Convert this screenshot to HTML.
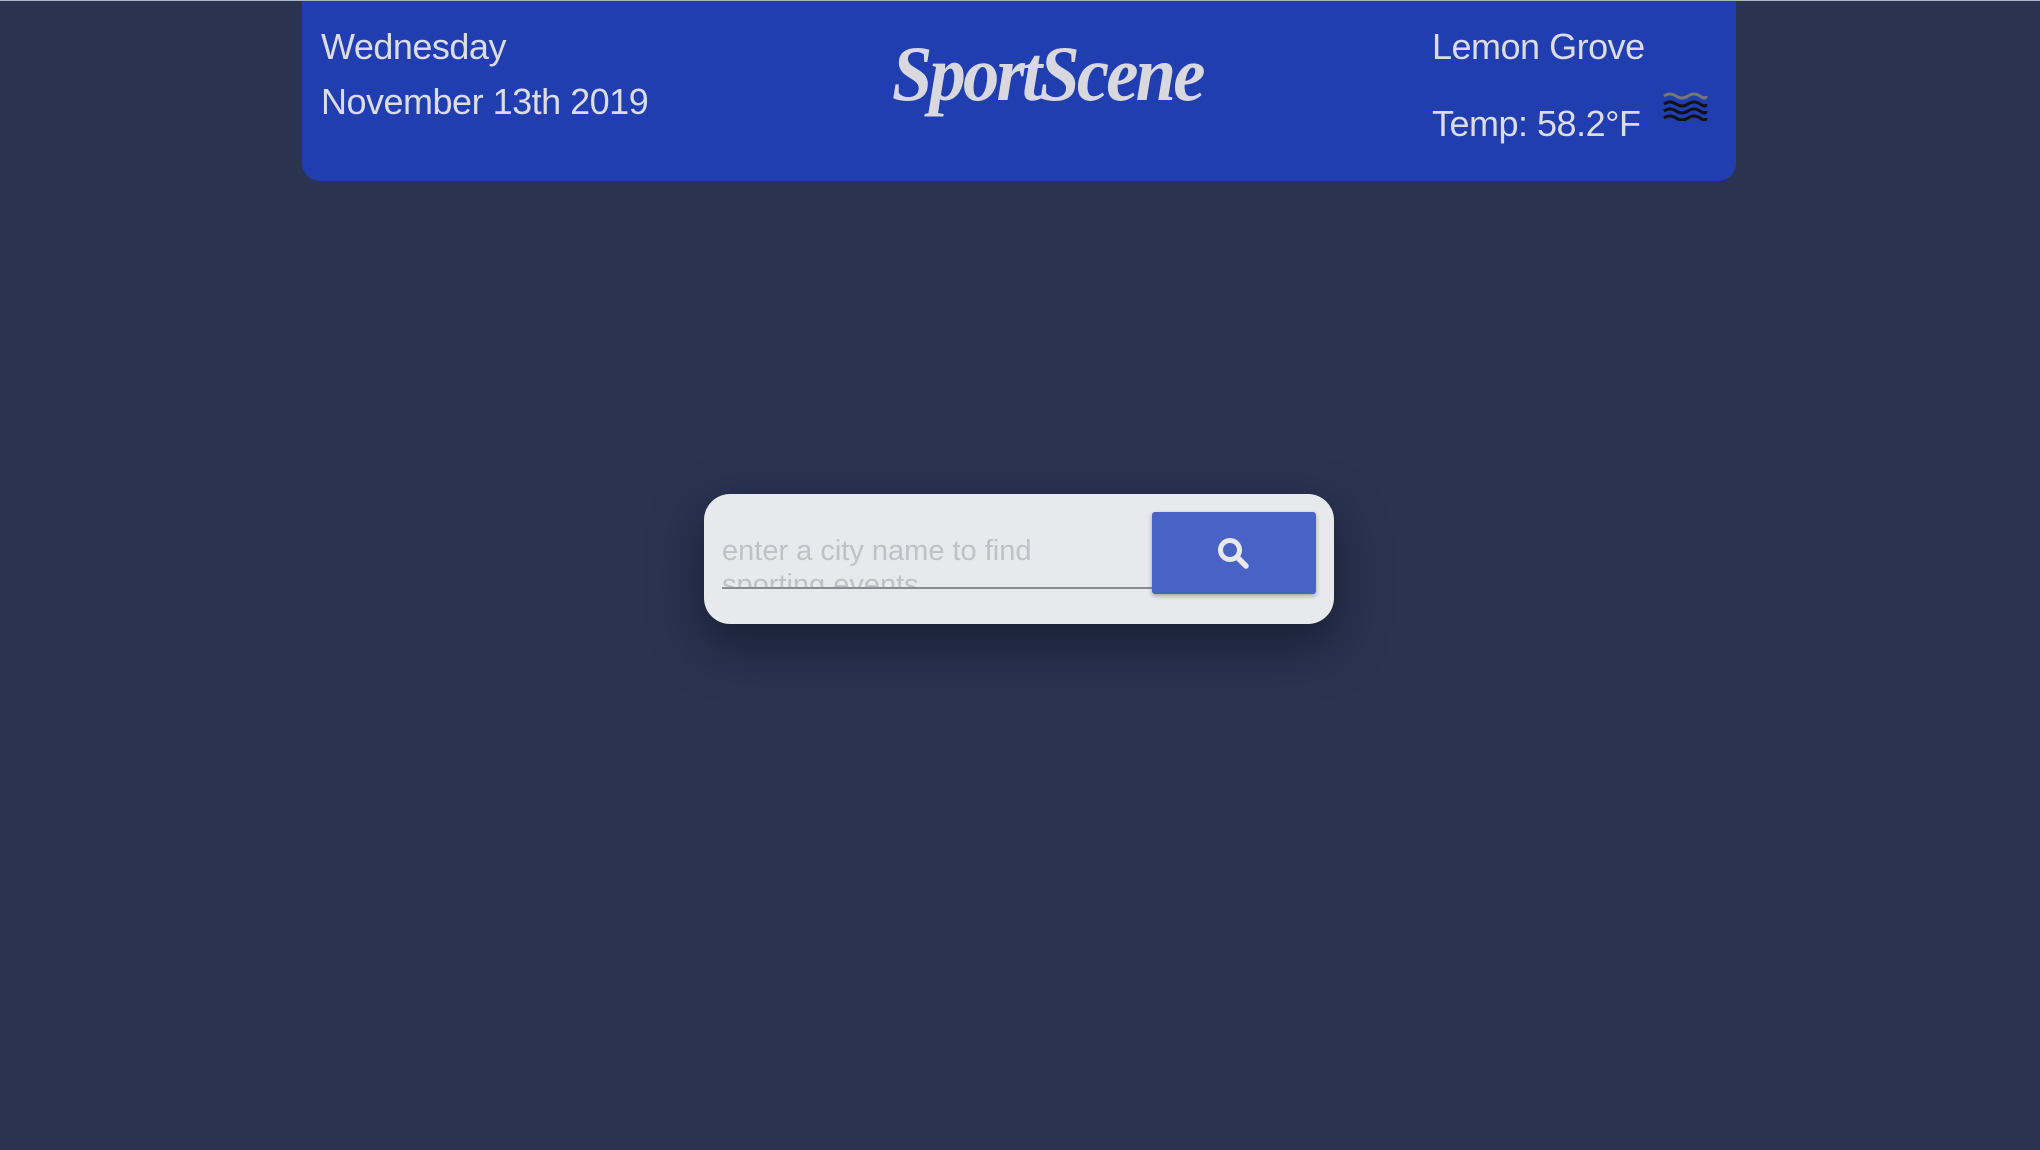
<!DOCTYPE html>
<html><head><meta charset="utf-8"><style>
html,body{margin:0;padding:0;width:2040px;height:1150px;background:#2a3350;overflow:hidden;font-family:"Liberation Sans","DejaVu Sans",sans-serif}
.hdr{position:absolute;left:302px;top:1px;width:1434px;height:180px;background:#203eb0;border-radius:0 0 18px 18px;color:#dcdce4}
.top{position:absolute;left:0;top:0;width:2040px;height:1px;background:#aab0c8}
.t{position:absolute;font-size:36px;white-space:nowrap;letter-spacing:-0.5px}
.logo{position:absolute;left:590px;top:28px;font-family:"Liberation Serif",serif;font-style:italic;font-weight:bold;font-size:78px;color:#d8d8de;letter-spacing:-3px;transform:scaleX(0.93);transform-origin:left}
.card{position:absolute;left:704px;top:494px;width:630px;height:130px;background:#e8e9ed;border-radius:26px;box-shadow:0 20px 50px rgba(10,15,30,.55)}
.ph{position:absolute;left:18px;top:40px;width:420px;height:54px;overflow:hidden;font-size:29px;line-height:34px;color:#c0c1c7}
.ul{position:absolute;left:18px;top:93px;width:430px;height:2px;background:#8a8b90}
.btn{position:absolute;left:448px;top:18px;width:164px;height:82px;background:#4862c6;border-radius:3px;box-shadow:0 2px 5px rgba(0,0,0,.3)}
</style></head><body>
<div class="top"></div>
<div class="hdr">
 <div class="t" style="left:19px;top:25px">Wednesday</div>
 <div class="t" style="left:19px;top:80px">November 13th 2019</div>
 <div class="logo">SportScene</div>
 <div class="t" style="left:1130px;top:25px">Lemon Grove</div>
 <div class="t" style="left:1130px;top:102px">Temp: 58.2°F</div>
 <svg style="position:absolute;left:1360px;top:90px" width="46" height="30" viewBox="0 0 46 30">
  <path d="M2 5 Q8 1 14 5 T26 5 T38 5 T44 5" stroke="#777" stroke-width="3" fill="none"/>
  <path d="M2 13 Q8 9 14 13 T26 13 T38 13 T44 13" stroke="#111" stroke-width="3" fill="none"/>
  <path d="M2 20 Q8 16 14 20 T26 20 T38 20 T44 20" stroke="#111" stroke-width="3" fill="none"/>
  <path d="M2 27 Q8 23 14 27 T26 27 T38 27 T44 27" stroke="#111" stroke-width="3" fill="none"/>
 </svg>
</div>
<div class="card">
 <div class="ph">enter a city name to find sporting events</div>
 <div class="ul"></div>
 <div class="btn">
  <svg style="position:absolute;left:64px;top:24px" width="36" height="36" viewBox="0 0 36 36">
   <circle cx="14" cy="14" r="9.5" stroke="#e8e9ed" stroke-width="5" fill="none"/>
   <path d="M21 21 L30 30" stroke="#e8e9ed" stroke-width="5.5" stroke-linecap="round"/>
  </svg>
 </div>
</div>
</body></html>
